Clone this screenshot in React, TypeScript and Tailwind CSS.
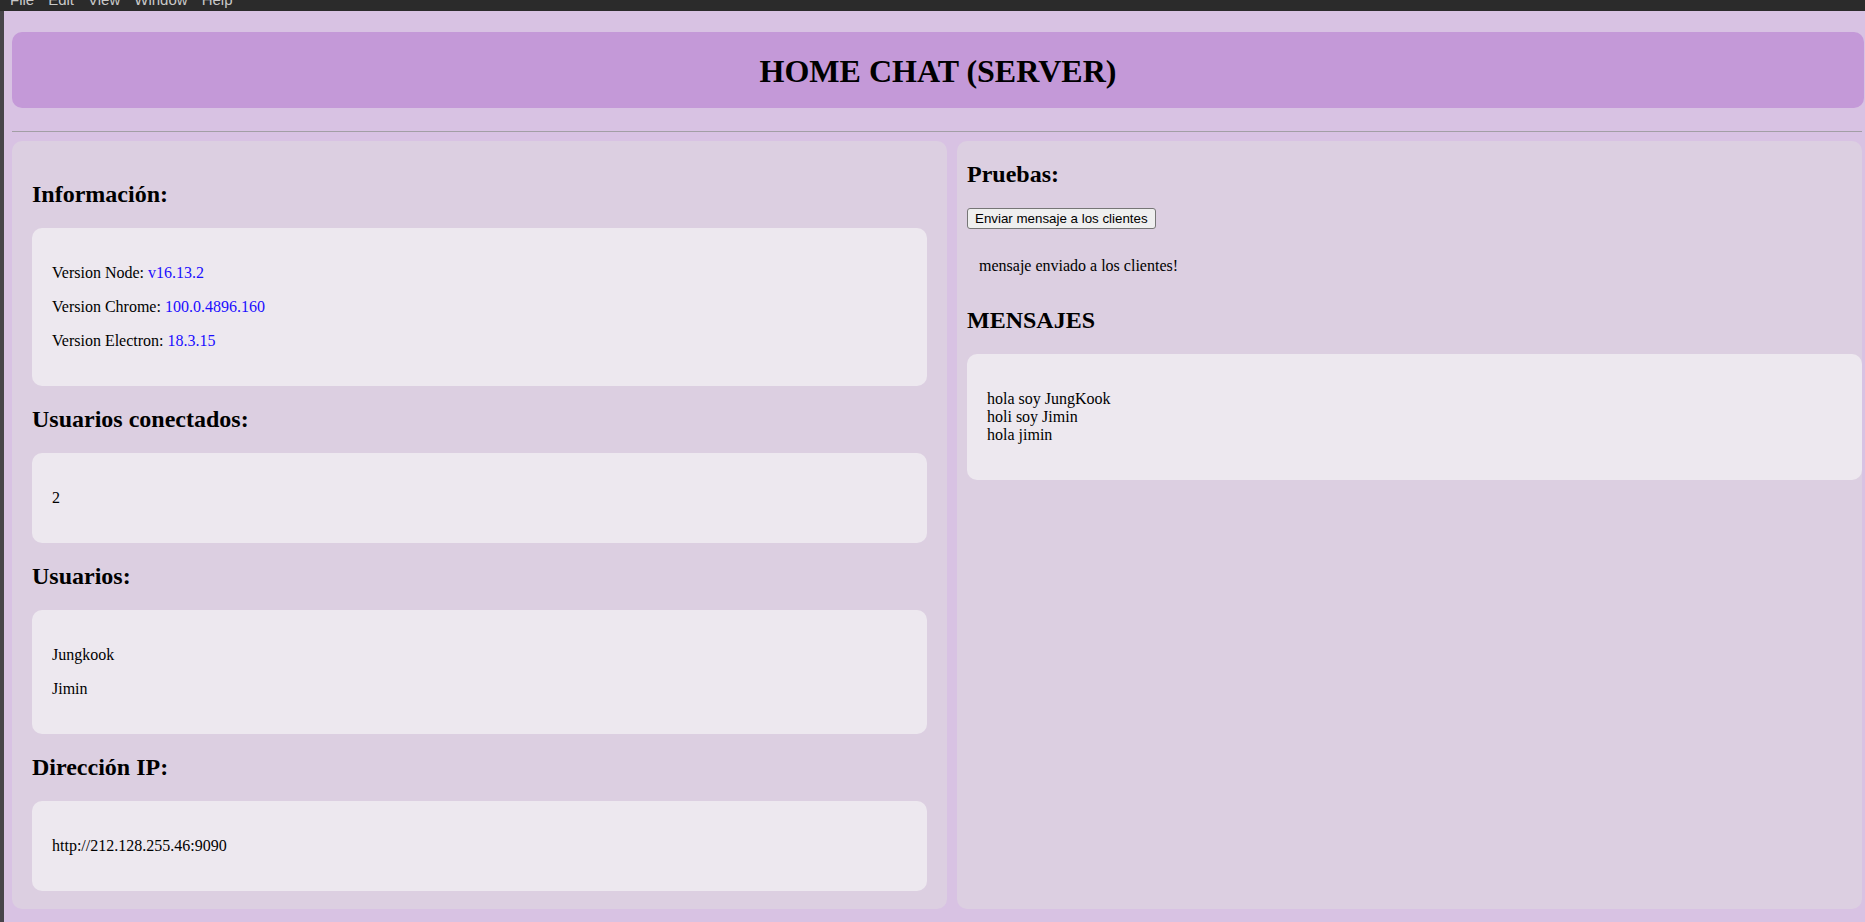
import React from 'react';

const menuItems = ['File', 'Edit', 'View', 'Window', 'Help'];

const Card = ({ children }: { children: React.ReactNode }) => (
  <div className="rounded-[10px] bg-[#ede8ef] px-5 py-5">{children}</div>
);

const Heading = ({ children }: { children: React.ReactNode }) => (
  <h2 className="my-[20px] text-[24px] font-bold leading-[normal]">{children}</h2>
);

const App = () => {
  return (
    <div
      className="flex h-screen flex-col bg-[#d8c2e3] text-black leading-[normal]"
      style={{ fontFamily: '"Liberation Serif", "Times New Roman", serif' }}
    >
      {/* barra de menú de electron (cortada) */}
      <div className="h-[11px] shrink-0 overflow-hidden bg-[#2b2b2b]">
        <div
          className="-mt-[8px] flex gap-[14px] pl-[10px] text-[15px] leading-none text-[#c9c9c9]"
          style={{ fontFamily: '"Liberation Sans", Arial, sans-serif' }}
        >
          {menuItems.map(item => (
            <span key={item}>{item}</span>
          ))}
        </div>
      </div>

      <div className="flex min-h-0 flex-1">
        <div className="w-[4px] shrink-0 bg-[#47444a]" />

        <div className="flex min-w-0 flex-1 flex-col pl-2 pt-[21px] pb-[13px]">
          <header className="mr-[1px] h-[76px] shrink-0 rounded-[10px] bg-[#c499d8] pt-[21px] text-center">
            <h1 className="text-[32px] font-bold leading-[normal]">HOME CHAT (SERVER)</h1>
          </header>

          <div className="mr-[3px] mt-[23px] h-px shrink-0 bg-[#a29ea5]" />

          <div className="mr-[3px] mt-[9px] flex min-h-0 flex-1 gap-[10px]">
            {/* columna izquierda */}
            <section className="w-[935px] shrink-0 rounded-[10px] bg-[#dccfe1] p-5">
              <Heading>Información:</Heading>
              <Card>
                <p className="my-4">
                  Version Node: <span className="text-[#1a0dff]">v16.13.2</span>
                </p>
                <p className="my-4">
                  Version Chrome: <span className="text-[#1a0dff]">100.0.4896.160</span>
                </p>
                <p className="my-4">
                  Version Electron: <span className="text-[#1a0dff]">18.3.15</span>
                </p>
              </Card>

              <Heading>Usuarios conectados:</Heading>
              <Card>
                <p className="my-4">2</p>
              </Card>

              <Heading>Usuarios:</Heading>
              <Card>
                <p className="my-4">Jungkook</p>
                <p className="my-4">Jimin</p>
              </Card>

              <Heading>Dirección IP:</Heading>
              <Card>
                <p className="my-4">http://212.128.255.46:9090</p>
              </Card>
            </section>

            {/* columna derecha */}
            <section className="flow-root min-w-0 flex-1 rounded-[10px] bg-[#dccfe1] pl-[10px]">
              <Heading>Pruebas:</Heading>
              <button
                className="block h-[21px] rounded-[3px] border border-[#767676] bg-[#efefef] px-[7px] text-[13.33px] leading-none text-black"
                style={{ fontFamily: '"Liberation Sans", Arial, sans-serif' }}
              >
                Enviar mensaje a los clientes
              </button>
              <div className="mt-4 p-3">mensaje enviado a los clientes!</div>

              <Heading>MENSAJES</Heading>
              <div className="rounded-[10px] bg-[#ede8ef] px-5 py-5">
                <p className="my-4">
                  hola soy JungKook
                  <br />
                  holi soy Jimin
                  <br />
                  hola jimin
                </p>
              </div>
            </section>
          </div>
        </div>
      </div>
    </div>
  );
};

export default App;
